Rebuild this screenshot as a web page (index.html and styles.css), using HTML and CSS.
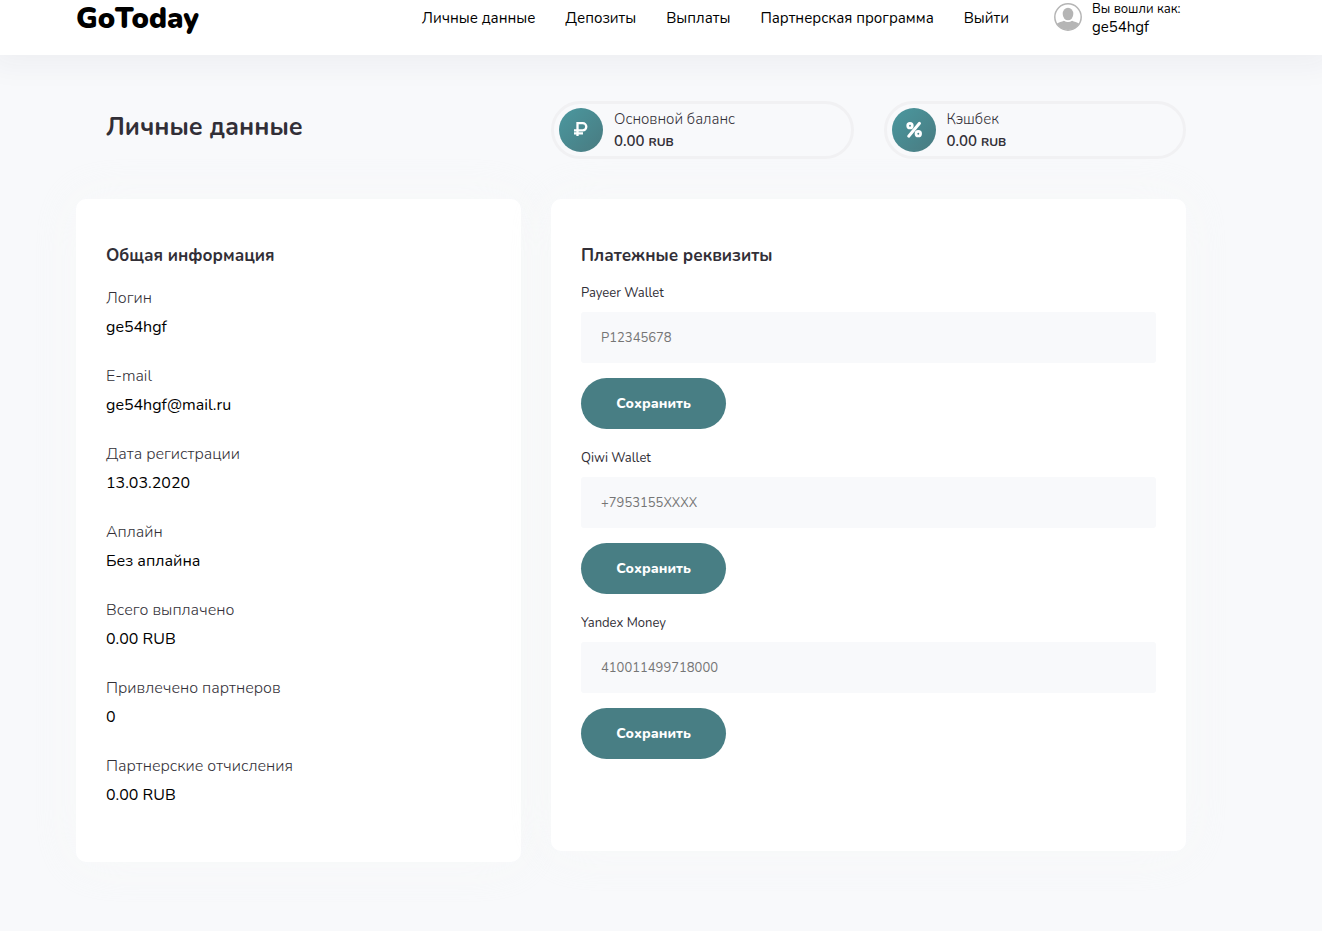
FILE: index.html
```html
<!DOCTYPE html>
<html lang="ru">
<head>
<meta charset="utf-8">
<title>GoToday — Личные данные</title>
<meta name="viewport" content="width=device-width, initial-scale=1">
<link rel="stylesheet" href="styles.css">
</head>
<body>
<header class="header">
  <div class="container header-row">
    <a class="logo" href="#">GoToday</a>
    <nav class="nav">
      <a href="#">Личные данные</a>
      <a href="#">Депозиты</a>
      <a href="#">Выплаты</a>
      <a href="#">Партнерская программа</a>
      <a href="#">Выйти</a>
    </nav>
    <div class="user">
      <svg class="avatar" viewBox="0 0 28 28" aria-hidden="true">
        <circle cx="14" cy="14" r="13.2" fill="#fff" stroke="#b5b5b5" stroke-width="1.5"/>
        <ellipse cx="14" cy="11" rx="5.3" ry="6.3" fill="#b5b5b5"/>
        <path d="M2.8 20.7C4.8 19.4 7.8 18.7 9.9 17.8Q14 20.3 18.1 17.8C20.2 18.7 23.2 19.4 25.2 20.7A13.2 13.2 0 0 1 2.8 20.7Z" fill="#b5b5b5"/>
      </svg>
      <div class="user-text">
        <span class="user-hint">Вы вошли как:</span>
        <span class="user-name">ge54hgf</span>
      </div>
    </div>
  </div>
</header>
<main class="container main">
  <h1 class="page-title">Личные данные</h1>
  <div class="balances">
    <div class="balance">
      <svg class="balance-icon" viewBox="0 0 44 44" aria-hidden="true">
        <defs><linearGradient id="teal" x1="0" y1="0" x2="1" y2="1"><stop offset="0" stop-color="#4b989f"/><stop offset="1" stop-color="#487a80"/></linearGradient></defs>
        <circle cx="22" cy="22" r="22" fill="url(#teal)"/>
        <path d="M18.5 28V15.2H23.700A3.600 3.600 0 0 1 23.700 22.400H15M15 25.300H24" fill="none" stroke="#fff" stroke-width="2.300"/>
      </svg>
      <div class="balance-text">
        <span class="balance-label">Основной баланс</span>
        <span class="balance-value">0.00 <small>RUB</small></span>
      </div>
    </div>
    <div class="balance">
      <svg class="balance-icon" viewBox="0 0 44 44" aria-hidden="true">
        <circle cx="22" cy="22" r="22" fill="url(#teal)"/>
        <g fill="none" stroke="#fff" stroke-width="2.700">
          <circle cx="18" cy="17.700" r="2.300"/>
          <circle cx="26.300" cy="25.700" r="2.300"/>
          <path d="M27.500 15.300L16.700 28.200" stroke-width="3" stroke-linecap="round"/>
        </g>
      </svg>
      <div class="balance-text">
        <span class="balance-label">Кэшбек</span>
        <span class="balance-value">0.00 <small>RUB</small></span>
      </div>
    </div>
  </div>
  <section class="card info">
    <h2 class="card-title">Общая информация</h2>
    <dl class="facts">
      <div class="fact"><dt>Логин</dt><dd>ge54hgf</dd></div>
      <div class="fact"><dt>E-mail</dt><dd>ge54hgf@mail.ru</dd></div>
      <div class="fact"><dt>Дата регистрации</dt><dd>13.03.2020</dd></div>
      <div class="fact"><dt>Аплайн</dt><dd>Без аплайна</dd></div>
      <div class="fact"><dt>Всего выплачено</dt><dd>0.00 RUB</dd></div>
      <div class="fact"><dt>Привлечено партнеров</dt><dd>0</dd></div>
      <div class="fact"><dt>Партнерские отчисления</dt><dd>0.00 RUB</dd></div>
    </dl>
  </section>
  <section class="card payment">
    <h2 class="card-title">Платежные реквизиты</h2>
    <form class="wallet">
      <label for="payeer">Payeer Wallet</label>
      <input id="payeer" type="text" placeholder="P12345678">
      <button type="submit">Сохранить</button>
    </form>
    <form class="wallet">
      <label for="qiwi">Qiwi Wallet</label>
      <input id="qiwi" type="text" placeholder="+7953155XXXX">
      <button type="submit">Сохранить</button>
    </form>
    <form class="wallet">
      <label for="yandex">Yandex Money</label>
      <input id="yandex" type="text" placeholder="410011499718000">
      <button type="submit">Сохранить</button>
    </form>
  </section>
</main>
</body>
</html>
```
FILE: styles.css
```css
* { box-sizing: border-box; }

body {
  margin: 0;
  background: #f8f9fb;
  color: #322f37;
  font-family: Nunito, "Open Sans", "Noto Sans", sans-serif;
}

h1, h2, dl, dd { margin: 0; }

.header {
  padding-right: 60px;
  background: #fff;
  box-shadow: 0 0 30px 10px rgba(40, 30, 80, 0.05);
}

.container {
  width: 100%;
  max-width: 1110px;
  margin: 0 auto;
}

.header-row {
  display: flex;
  align-items: flex-start;
  min-height: 55px;
}

.logo {
  flex: 1;
  color: #000;
  font-size: 29px;
  font-weight: 900;
  line-height: 38px;
  text-decoration: none;
}

.nav {
  display: flex;
  gap: 30px;
}

.nav a {
  color: #000;
  font-size: 15px;
  line-height: 36px;
  text-decoration: none;
  white-space: nowrap;
}

.user {
  display: flex;
  gap: 10px;
  width: 132px;
  margin-left: 45px;
}

.avatar {
  flex: none;
  width: 28px;
  height: 28px;
  margin-top: 3px;
}

.user-text {
  display: flex;
  flex-direction: column;
  color: #000;
  white-space: nowrap;
}

.user-hint { font-size: 13px; line-height: 18px; }
.user-name { font-size: 15px; line-height: 18px; }

.main {
  display: grid;
  grid-template-columns: repeat(12, 1fr);
  column-gap: 30px;
  align-items: start;
  width: calc(100% - 60px);
  margin-left: max(0px, calc((100% - 1170px) / 2));
  padding: 46px 0 69px;
}

.page-title {
  grid-column: span 5;
  padding-left: 30px;
  font-size: 25px;
  font-weight: 700;
  line-height: 52px;
}

.balances {
  grid-column: span 7;
  display: grid;
  grid-template-columns: 1fr 1fr;
  gap: 30px;
  margin-bottom: 40px;
}

.balance {
  display: flex;
  align-items: center;
  gap: 11px;
  height: 58px;
  padding: 0 5px;
  border: 3px solid #f1f1f3;
  border-radius: 29px;
}

.balance-icon {
  flex: none;
  width: 44px;
  height: 44px;
}

.balance-text {
  display: flex;
  flex-direction: column;
  font-size: 15px;
  line-height: 22px;
}

.balance-label { font-weight: 300; }
.balance-value { font-weight: 600; }
.balance-value small { font-size: 12px; font-weight: 700; }

.card {
  padding: 43px 30px;
  border-radius: 10px;
  background: #fff;
  box-shadow: 0 0 50px rgba(248, 250, 248, 0.7);
}

.info { grid-column: span 5; padding-bottom: 32px; }
.payment { grid-column: span 7; padding-bottom: 92px; }

.card-title {
  font-size: 17px;
  font-weight: 700;
  line-height: 27px;
}

.facts { padding-top: 15px; }

.fact {
  padding-bottom: 20px;
  font-size: 16px;
  line-height: 29px;
}

.fact dt { font-weight: 300; }
.fact dd { color: #000; }

.wallet {
  display: flex;
  flex-direction: column;
  align-items: flex-start;
  padding-top: 15px;
}

.wallet + .wallet { padding-top: 20px; }

.wallet label {
  font-size: 13px;
  line-height: 18px;
  margin-bottom: 10px;
}

.wallet input {
  width: 100%;
  height: 51px;
  margin-bottom: 15px;
  padding: 0 20px;
  border: 0;
  border-radius: 3px;
  background: #f8f9fb;
  color: #322f37;
  font: inherit;
  font-size: 13px;
}

.wallet input::placeholder { color: #757575; opacity: 1; }

.wallet button {
  height: 51px;
  padding: 0 35px;
  min-width: 145px;
  border: 0;
  border-radius: 26px;
  background: #487e84;
  color: #fff;
  font: inherit;
  font-size: 14px;
  font-weight: 800;
}
```
